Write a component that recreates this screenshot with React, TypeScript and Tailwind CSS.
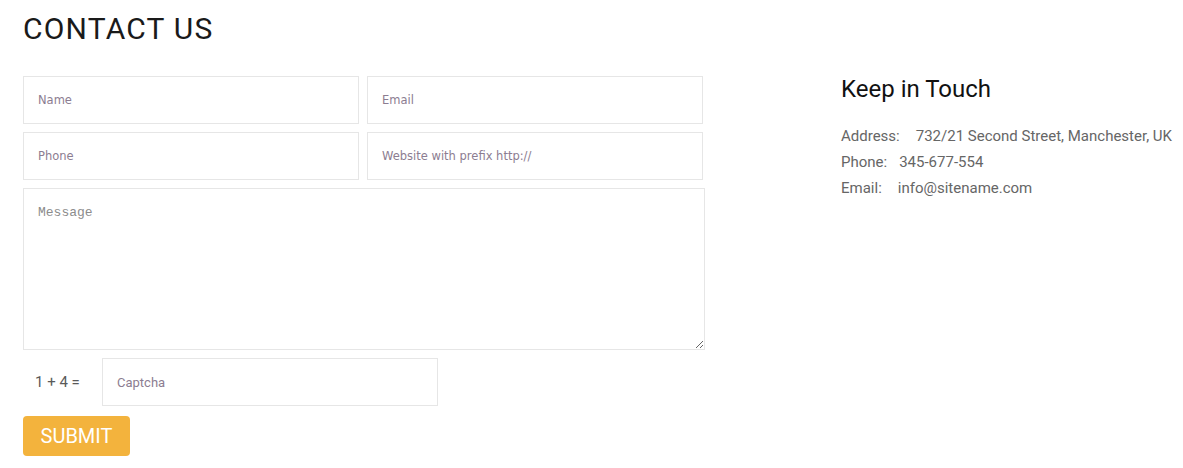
export default function App() {
  const inputCls =
    "h-[48px] border border-[#e6e6e6] bg-white px-[14px] text-[11.5px] text-[#555] placeholder:text-[#8c7d91] outline-none font-['DejaVu_Sans',sans-serif]";

  return (
    <div className="min-h-[468px] bg-white font-['Roboto',sans-serif]">
      <div className="px-[23px] pt-[11px]">
        <h1 className="text-[30px] leading-[36px] font-normal tracking-[1.2px] text-[#1a1a1a]">CONTACT US</h1>
        <div className="flex mt-[29px]">
          <form className="w-[682px] flex flex-col">
            <div className="flex gap-[8px]">
              <input className={`${inputCls} w-[336px]`} placeholder="Name" />
              <input className={`${inputCls} w-[336px]`} placeholder="Email" />
            </div>
            <div className="flex gap-[8px] mt-[8px]">
              <input className={`${inputCls} w-[336px]`} placeholder="Phone" />
              <input className={`${inputCls} w-[336px]`} placeholder="Website with prefix http://" />
            </div>
            <textarea
              className="mt-[8px] h-[162px] w-[682px] border border-[#e6e6e6] px-[14px] pt-[14px] text-[13px] text-[#555] placeholder:text-[#8c8c8c] outline-none font-['Liberation_Mono',monospace]"
              placeholder="Message"
            />
            <div className="flex items-center mt-[8px]">
              <span className="w-[79px] pl-[12px] text-[15px] text-[#5a5a5a]">1 + 4 =</span>
              <input className={`${inputCls} w-[336px] font-['Roboto',sans-serif] text-[13px]`} placeholder="Captcha" />
            </div>
            <div className="mt-[10px]">
              <button
                type="button"
                className="h-[40px] w-[107px] rounded-[4px] bg-[#f3b33d] text-[20px] text-white"
              >
                SUBMIT
              </button>
            </div>
          </form>
          <div className="ml-[136px] -mt-[2px] whitespace-nowrap">
            <h2 className="text-[24px] leading-[30px] text-[#111]">Keep in Touch</h2>
            <div className="mt-[19px] text-[15px] leading-[26px] text-[#666]">
              <div>
                <span className="mr-[16px]">Address:</span>732/21 Second Street, Manchester, UK
              </div>
              <div>
                <span className="mr-[12px]">Phone:</span>345-677-554
              </div>
              <div>
                <span className="mr-[16px]">Email:</span>info@sitename.com
              </div>
            </div>
          </div>
        </div>
      </div>
    </div>
  );
}
